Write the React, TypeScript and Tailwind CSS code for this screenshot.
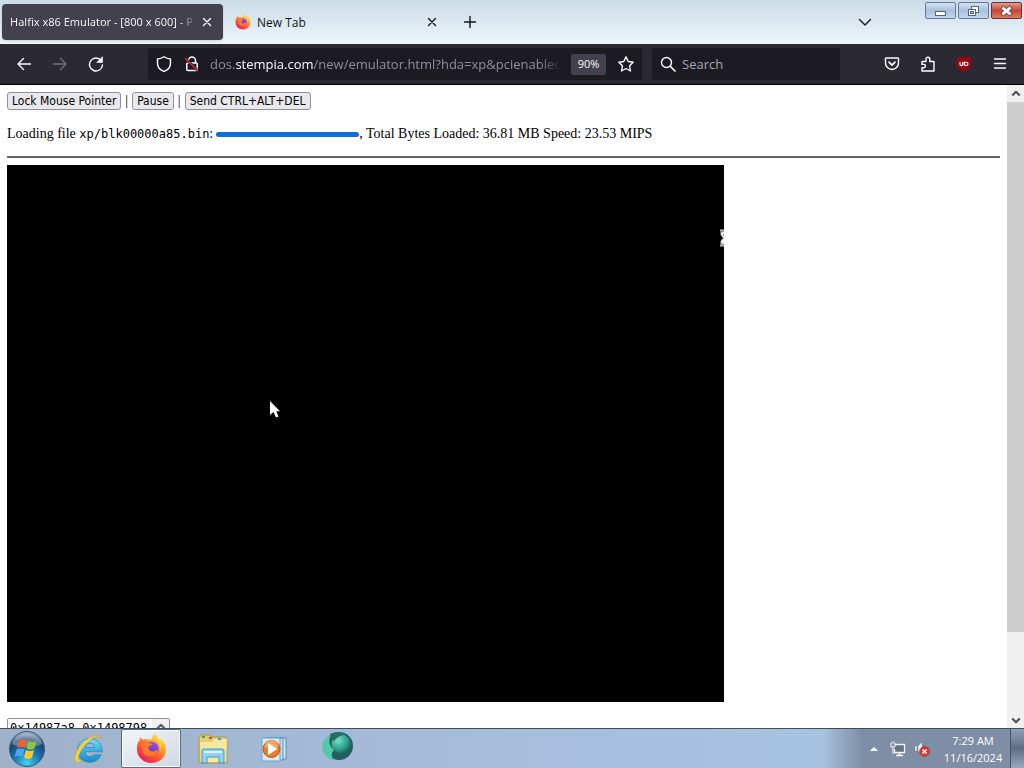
import React from "react";

type Stroke = { className?: string; children: React.ReactNode };

function Line({ className = "size-4", children }: Stroke) {
  return (
    <svg
      viewBox="0 0 16 16"
      className={`${className} shrink-0`}
      fill="none"
      stroke="currentColor"
      strokeWidth="1.4"
      strokeLinecap="round"
      strokeLinejoin="round"
      aria-hidden="true"
    >
      {children}
    </svg>
  );
}

function Firefox({ className, id }: { className: string; id: string }) {
  return (
    <svg viewBox="0 0 32 32" className={`${className} shrink-0`} aria-hidden="true">
      <defs>
        <linearGradient id={`${id}a`} x1="0.85" y1="0.05" x2="0.2" y2="0.95">
          <stop offset="0" stopColor="#fff04a" />
          <stop offset="0.35" stopColor="#ffa02a" />
          <stop offset="0.65" stopColor="#ff5530" />
          <stop offset="1" stopColor="#e31c62" />
        </linearGradient>
        <linearGradient id={`${id}b`} x1="0.7" y1="0" x2="0.3" y2="1">
          <stop offset="0" stopColor="#a24be8" />
          <stop offset="1" stopColor="#4b3bb4" />
        </linearGradient>
      </defs>
      <path
        d="M19 1c3 2 4 4 5 6l2 1-1-3c4 3 6 8 6 12 0 8-7 14-15 14S1 25 1 16.500C1 12 2 9 4 7l0-3 3 3c2-1 4-1 6 0 2-1 4 0 4-3 0-1 1-2 2-3z"
        fill={`url(#${id}a)`}
      />
      <circle cx="16" cy="16.500" r="7.500" fill={`url(#${id}b)`} />
      <path d="M4 9c4-2 7-1 9 1l4 1c0 2-3 2-4 3-1 3 1 5 4 5s4-2 6-1c-1 4-4 6-8 6-6 0-9-4-8-9z" fill="#ff7a2c" />
      <path d="M17 6c5 1 9 5 8 11 3-5 0-10-4-13z" fill="#ffd23a" />
    </svg>
  );
}

function TabStrip() {
  return (
    <header className="flex h-11 shrink-0 items-start bg-linear-to-b from-[#cbdce8] via-[#dce8f0] to-[#eef5fb] pl-0.5 font-['Open_Sans',sans-serif] text-xs text-[#15141a]">
      <div className="mt-1 flex h-9 w-[221px] items-center rounded bg-[#42414d] pr-2 pl-2 text-[#fbfbfe] shadow">
        <span className="flex-1 overflow-hidden bg-linear-to-r from-[#fbfbfe] from-90% to-[#62616c] bg-clip-text font-['Noto_Sans',sans-serif] text-[11px] whitespace-nowrap text-transparent">
          Halfix x86 Emulator - [800 x 600] - P
        </span>
        <button aria-label="Close Halfix tab" className="ml-1 flex size-4 shrink-0 items-center justify-center">
          <Line><path d="M4.500 4.500l7 7M11.500 4.500l-7 7" /></Line>
        </button>
      </div>
      <div className="mt-1 ml-1 flex h-9 w-[221px] items-center pr-2 pl-2">
        <Firefox className="size-4" id="tab" />
        <span className="ml-1.5 flex-1 pt-0.5">New Tab</span>
        <button aria-label="Close New Tab" className="flex size-4 items-center justify-center">
          <Line><path d="M4.500 4.500l7 7M11.500 4.500l-7 7" /></Line>
        </button>
      </div>
      <button aria-label="Open a new tab" className="mt-1 ml-3 flex h-9 w-5 items-center justify-center">
        <Line><path d="M8 2.500v11M2.500 8h11" /></Line>
      </button>
      <button aria-label="List all tabs" className="mt-1 mr-12 ml-auto flex h-9 w-6 items-center justify-center">
        <Line><path d="M2.500 5.500L8 11l5.500-5.500" /></Line>
      </button>
      <div className="mt-0.5 mr-0.5 flex gap-0.5">
        <button aria-label="Minimize" className="flex h-[17px] w-[31px] items-center justify-center rounded-xs border border-[#66799a] bg-linear-to-b from-[#d3e2f2] via-[#a9bfdb] to-[#c4d9ef]">
          <svg viewBox="0 0 13 12" className="h-3 w-[13px]"><rect x="1.500" y="6.500" width="10" height="4" fill="#fff" stroke="#56647c" /></svg>
        </button>
        <button aria-label="Restore" className="flex h-[17px] w-[31px] items-center justify-center rounded-xs border border-[#66799a] bg-linear-to-b from-[#d3e2f2] via-[#a9bfdb] to-[#c4d9ef]">
          <svg viewBox="0 0 13 12" className="h-3 w-[13px]" fill="#fff" stroke="#56647c">
            <rect x="4.500" y="1.500" width="7" height="6" />
            <rect x="1.500" y="4.500" width="7" height="6" />
            <rect x="3.500" y="6.500" width="3" height="2" fill="#a9bfdb" />
          </svg>
        </button>
        <button aria-label="Close" className="flex h-[17px] w-[31px] items-center justify-center rounded-xs border border-[#6b2f35] bg-linear-to-b from-[#e39a8c] via-[#c94536] to-[#dd7a62]">
          <svg viewBox="0 0 13 12" className="h-3 w-[13px]" fill="none" strokeLinecap="square">
            <path d="M3.500 3.500l6 5M9.500 3.500l-6 5" stroke="#6e4a50" strokeWidth="4.600" />
            <path d="M3.500 3.500l6 5M9.500 3.500l-6 5" stroke="#fff" strokeWidth="2.800" />
          </svg>
        </button>
      </div>
    </header>
  );
}

function NavBar() {
  return (
    <nav className="flex h-[41px] shrink-0 items-center border-b border-black bg-[#2b2a33] pr-4 pl-4 font-['Open_Sans',sans-serif] text-[13px] text-[#fbfbfe]">
      <div className="flex gap-5">
        <button aria-label="Back"><Line><path d="M14.500 8H2M7.500 2.500L2 8l5.500 5.500" /></Line></button>
        <button aria-label="Forward" className="text-[#73727a]" disabled><Line><path d="M1.500 8H14M8.500 2.500L14 8l-5.500 5.500" /></Line></button>
        <button aria-label="Reload">
          <Line><path d="M13.500 5A6.500 6.500 0 1 0 14.500 9" /><path d="M14.500 1v5.500H9z" fill="currentColor" strokeWidth="0.6" /></Line>
        </button>
      </div>
      <div className="ml-11 flex h-8 min-w-0 flex-1 items-center rounded-xs bg-[#1c1b22] pr-2 pl-2">
        <Line><path d="M8 .8c2 1.400 4 2 6.500 2.200v4.500c0 3.500-2.500 6.500-6.500 7.900-4-1.400-6.500-4.400-6.500-7.900V3C4 2.800 6 2.200 8 .8z" /></Line>
        <svg viewBox="0 0 16 16" className="ml-3 size-4 shrink-0" fill="none" stroke="#fbfbfe" strokeWidth="1.500" aria-hidden="true">
          <path d="M4.500 7V4.500a3.500 3.500 0 0 1 7 0V7" />
          <rect x="2.800" y="7" width="10.400" height="7.500" rx="1" />
          <path d="M2 3l11 11" stroke="#1c1b22" strokeWidth="2.600" />
          <path d="M1.500 2.500l12 12" stroke="#e22850" strokeWidth="1.400" strokeLinecap="round" />
        </svg>
        <span className="ml-2.5 min-w-0 flex-1 overflow-hidden mask-r-from-94% pt-0.5 whitespace-nowrap text-[#8f8f9d]">
          dos.<span className="text-[#fbfbfe]">stempia.com</span>/new/emulator.html?hda=xp&amp;pcienabled
        </span>
        <button className="ml-2.5 h-[21px] w-[35px] rounded-xs bg-[#42414d] text-[11px]">90%</button>
        <button aria-label="Bookmark" className="ml-3">
          <Line><path d="M8 .8l2.200 4.700 5 .7-3.600 3.600.9 5.200L8 12.500 3.500 15l.9-5.200L.8 6.200l5-.7z" /></Line>
        </button>
      </div>
      <label className="ml-2.5 flex h-8 w-[188px] items-center rounded-xs bg-[#1c1b22] pl-2">
        <Line><circle cx="6.500" cy="6.500" r="5" /><path d="M10.300 10.300L15 15" strokeWidth="1.700" /></Line>
        <input aria-label="Search" placeholder="Search" className="ml-1.5 w-36 bg-transparent pt-0.5 outline-none placeholder:text-[#a9a8b0]" />
      </label>
      <div className="ml-11 flex gap-5">
        <button aria-label="Save to Pocket">
          <Line><path d="M2.500 2h11A1 1 0 0 1 14.500 3.500V7A6.500 6.500 0 0 1 1.500 7V3.500A1 1 0 0 1 2.500 2z" /><path d="M5 6.200L8 9.200l3-3" strokeWidth="1.700" /></Line>
        </button>
        <button aria-label="Extensions">
          <Line><path d="M2 5.500h4V3.200a1.900 1.900 0 0 1 3.800 0v2.300H14V15H2v-3.200h1.800a1.700 1.700 0 0 0 0-3.400H2z" /></Line>
        </button>
        <button aria-label="uBlock Origin">
          <svg viewBox="0 0 16 16" className="size-4">
            <path d="M8 .3c2.200 1.200 4.400 1.400 7 1.700v6c0 3.800-3 6.200-7 7.700C4 14.200 1 11.800 1 8V2c2.600-.3 4.800-.5 7-1.700z" fill="#9b0410" />
            <path d="M4 6v2.300a1.300 1.300 0 0 0 2.600 0V6M8.200 5.500v4" fill="none" stroke="#fff" strokeWidth="1.100" />
            <rect x="8.400" y="6.200" width="3.600" height="3.300" rx="1.600" fill="none" stroke="#fff" strokeWidth="1.100" />
          </svg>
        </button>
        <button aria-label="Menu"><Line><path d="M2.500 3h11M2.500 7.500h11M2.500 12h11" /></Line></button>
      </div>
    </nav>
  );
}

function PageButton({ children }: { children: string }) {
  return (
    <button className="h-[18px] rounded-[3px] border border-[#8f8f9d] bg-[#e9e9ed] px-1 font-['DejaVu_Sans_Condensed','Noto_Sans',sans-serif] text-[12px] leading-4 whitespace-nowrap">
      {children}
    </button>
  );
}

function Page() {
  return (
    <div className="flex min-h-0 flex-1 bg-white">
      <main className="min-w-0 flex-1 overflow-hidden px-[7px] pt-[7px] font-['Liberation_Serif',serif] text-[14px] leading-[18px] text-black">
        <div className="flex items-center gap-1">
          <PageButton>Lock Mouse Pointer</PageButton>
          <span>|</span>
          <PageButton>Pause</PageButton>
          <span>|</span>
          <PageButton>Send CTRL+ALT+DEL</PageButton>
        </div>
        <div className="mt-[15px] flex items-center whitespace-nowrap">
          <span>
            Loading file <span className="font-['DejaVu_Sans_Mono',monospace] text-[12px]">xp/blk00000a85.bin</span>:
          </span>
          <div role="progressbar" aria-label="File progress" aria-valuenow={100} className="ml-[3px] h-[5px] w-[143px] rounded-full bg-[#0f6cdd]" />
          <span>, Total Bytes Loaded: 36.81 MB Speed: 23.53 MIPS</span>
        </div>
        <hr className="mt-[13px] mb-[7px] border-t-2 border-[#656565]" />
        <div className="relative h-[537px] w-[717px] overflow-hidden bg-black">
          <svg viewBox="0 0 12 19" className="absolute top-[235px] left-[262px] h-[19px] w-3">
            <path d="M1 1v14l3.500-3L7 17.500l2.500-1L7.300 11.300H11z" fill="#fff" />
          </svg>
          <svg viewBox="0 0 12 18" className="absolute top-16 -right-[7px] h-[18px] w-3" fill="#fff" stroke="#bbb">
            <path d="M1 1.500h10M1 16.500h10" strokeWidth="2" />
            <path d="M2 3h8v3L7.500 9l2.500 3v3H2v-3l2.500-3L2 6z" />
            <path d="M3.500 5.500h5L6 8z" fill="#222" stroke="none" />
          </svg>
        </div>
        <div className="mt-4 flex h-10 w-[163px] overflow-hidden rounded-xs border border-[#8f8f9d]">
          <textarea
            aria-label="Debug output"
            readOnly
            defaultValue="0x14987a8 0x1498798"
            className="min-w-0 flex-1 resize-none overflow-hidden px-0.5 pt-0.5 font-['DejaVu_Sans_Mono',monospace] text-[12px] leading-[14px] outline-none"
          />
          <button aria-label="Scroll output up" className="flex h-4 w-[17px] items-center justify-center bg-[#f0f0f0] text-[#606060]">
            <Line className="size-3"><path d="M3 10l5-5 5 5" strokeWidth="2.800" strokeLinecap="butt" /></Line>
          </button>
        </div>
      </main>
      <aside aria-label="Page scroll bar" className="flex w-[17px] shrink-0 flex-col bg-[#f0f0f0] text-[#505050]">
        <button aria-label="Scroll up" className="flex h-[17px] items-center justify-center">
          <Line className="size-3"><path d="M3 10l5-5 5 5" strokeWidth="2.800" strokeLinecap="butt" /></Line>
        </button>
        <div className="min-h-0 flex-1"><div className="h-[87%] bg-[#cdcdcd]" /></div>
        <button aria-label="Scroll down" className="flex h-[17px] items-center justify-center">
          <Line className="size-3"><path d="M3 6l5 5 5-5" strokeWidth="2.800" strokeLinecap="butt" /></Line>
        </button>
      </aside>
    </div>
  );
}

function Taskbar() {
  return (
    <footer className="flex h-10 shrink-0 items-stretch border-t border-[#3e4b5e] bg-linear-to-r from-[#9fb2ca] via-[#a6bddc] via-50% to-[#a9c6e4] font-['Noto_Sans',sans-serif]">
      <button aria-label="Start" className="flex w-[54px] items-center justify-center">
        <svg viewBox="0 0 38 38" className="size-[38px]">
          <defs>
            <radialGradient id="orb" cx="0.5" cy="0.9" r="0.9">
              <stop offset="0" stopColor="#45d5f2" />
              <stop offset="0.4" stopColor="#1878b2" />
              <stop offset="0.75" stopColor="#1c456f" />
              <stop offset="1" stopColor="#a9c4d8" />
            </radialGradient>
          </defs>
          <circle cx="19" cy="19" r="17.500" fill="url(#orb)" stroke="#39546e" />
          <path d="M4 14a16 16 0 0 1 30 0c-8 4-22 4-30 0z" fill="#fff" opacity="0.3" />
          <path d="M11 11c3-2 5-2 8-.5l-2 7.500c-3-1.500-5-1.500-8 0z" fill="#f0622b" />
          <path d="M20.500 11c3 1.500 5 1.500 8-.5l-2 8c-3 1.500-5 1.500-8 0z" fill="#8cc63c" />
          <path d="M8.500 19.500c3-1.500 5-1.500 8 0l-2 7.500c-3-1.500-5-1.500-8 0z" fill="#49a9ea" />
          <path d="M18 20c3 1.500 5 1.500 8 0l-2 7.500c-3 1.800-5 1.500-8 0z" fill="#fdc82f" />
        </svg>
      </button>
      <button aria-label="Internet Explorer" className="flex w-[67px] items-center justify-center">
        <svg viewBox="0 0 34 34" className="size-8">
          <defs>
            <linearGradient id="ie" x1="0" y1="0" x2="0" y2="1">
              <stop offset="0" stopColor="#7edcf8" /><stop offset="0.5" stopColor="#36b2e8" /><stop offset="1" stopColor="#168acb" />
            </linearGradient>
          </defs>
          <path d="M32 20H14c0 3 2 5 5 5 2 0 3-1 4-2h8c-2 5-6 8-12 8C11 31 6 26 6 18.500S11 6 19 6s13.500 6 13 14zM14 15.500h10c0-3-2-4.500-5-4.500s-5 1.500-5 4.500z" fill="url(#ie)" stroke="#237eb1" strokeWidth="0.7" />
          <path d="M30 6c0-3-2-4-5-3C16 4 4 15 3 27c0 5 4 5 9 2-4 1-6 0-5-4C9 17 19 5 27 4c2 0 2 1 3 2z" fill="#f5d342" stroke="#c49b23" strokeWidth="0.500" />
        </svg>
      </button>
      <button aria-label="Firefox" className="flex w-[60px] items-center justify-center rounded-xs border border-[#596b83] bg-linear-to-br from-[#f3f6fa] to-[#cdd7e4] shadow-[inset_0_0_0_1px_#f9fbfd]">
        <Firefox className="size-[31px]" id="task" />
      </button>
      <button aria-label="Windows Explorer" className="flex w-[64px] items-center justify-center">
        <svg viewBox="0 0 34 32" className="h-8 w-[34px]">
          <path d="M3 5l2-3h8l2 2h14l2 3v23H3z" fill="#e6cd72" stroke="#b5943b" />
          <path d="M4 9h12l2-3h13l-1 23H5z" fill="#f7e8a0" />
          <path d="M6 4h3" stroke="#39a65a" strokeWidth="2" /><path d="M13 5h3" stroke="#d65140" strokeWidth="2" /><path d="M22 6h3" stroke="#3a9bd5" strokeWidth="2" />
          <path d="M6 30V18q0-2 2-2h18q2 0 2 2v12h-5v-6H11v6z" fill="#8fd3f4" stroke="#4796cc" />
          <path d="M8 19h18" stroke="#d9f4ff" strokeWidth="2" />
        </svg>
      </button>
      <button aria-label="Media Player" className="flex w-[58px] items-center justify-center">
        <svg viewBox="0 0 28 28" className="size-7">
          <path d="M8 3h18v21H8z" fill="#d7ebfa" stroke="#4e8cbd" /><path d="M5 3h18v22H5z" fill="#c0dff5" stroke="#4e8cbd" /><path d="M2 3h18v23H2z" fill="#d7e9f5" stroke="#6ba5cd" />
          <circle cx="11.500" cy="14" r="8.500" fill="#ee7b25" stroke="#bb5422" /><path d="M4.500 12a7 7 0 0 1 14 0c-4 2-10 2-14 0z" fill="#fba55c" />
          <path d="M8 8l9.500 6L8 20z" fill="#fff" />
        </svg>
      </button>
      <button aria-label="Globe" className="flex w-[70px] items-start justify-center pt-0.5">
        <svg viewBox="0 0 34 32" className="h-8 w-[34px]">
          <defs><radialGradient id="globe" cx="0.35" cy="0.3" r="0.8"><stop offset="0" stopColor="#77e0c6" /><stop offset="0.6" stopColor="#2d9f8e" /><stop offset="1" stopColor="#175651" /></radialGradient></defs>
          <circle cx="18" cy="15" r="14" fill="#235f5c" />
          <path d="M10 4C2 7-1 15 3 22c2 4 6 7 10 7-3-4-3-7 0-10-5-4-6-9-3-15z" fill="#53c9ac" />
          <circle cx="20" cy="13" r="9.500" fill="url(#globe)" />
          <path d="M9 3c5-3 14-2 18 1-5-1-10 1-14 6-2-1-3-3-4-7z" fill="#286e68" />
        </svg>
      </button>
      <div className="ml-auto flex items-center bg-linear-to-r from-transparent to-[#7d8ea5] to-20% pl-11 text-white">
        <button aria-label="Show hidden icons" className="flex w-4 justify-center">
          <svg viewBox="0 0 8 5" className="h-[5px] w-2"><path d="M0 5l4-4 4 4z" fill="#fff" /></svg>
        </button>
        <svg viewBox="0 0 16 16" className="ml-2 size-4" fill="none" stroke="#f5f8fc" role="img" aria-label="Network">
          <path d="M5 3.500h9.500v8H4.500V8" fill="#637184" strokeWidth="1.300" /><path d="M9.500 12v2M6 14.500h7" strokeWidth="1.500" /><path d="M1 2v4h4V2M3 6v7M2 .5v2M4 .5v2" />
        </svg>
        <svg viewBox="0 0 16 16" className="ml-2 size-4" role="img" aria-label="Muted">
          <path d="M1 5h2v5H1zM4 5l4-4v13l-4-4z" fill="#f1f4f7" stroke="#66758a" strokeWidth="0.400" />
          <circle cx="10.500" cy="10.500" r="5" fill="#d83b35" stroke="#a92b2c" strokeWidth="0.500" /><path d="M8.500 8.500l4 4M12.500 8.500l-4 4" stroke="#fff" strokeWidth="1.400" />
        </svg>
        <div className="w-[80px] pl-1.5 text-center font-['Open_Sans',sans-serif] text-[11px] leading-[17px]"><div>7:29 AM</div><div>11/16/2024</div></div>
        <button aria-label="Show desktop" className="w-3.5 self-stretch border-l border-[#43536a] bg-linear-to-b from-[#90a0b4] via-[#5e6d80] to-[#99a9bc]" />
      </div>
    </footer>
  );
}

export default function App() {
  return (
    <div className="flex h-screen flex-col overflow-hidden bg-white">
      <TabStrip />
      <NavBar />
      <Page />
      <Taskbar />
    </div>
  );
}
